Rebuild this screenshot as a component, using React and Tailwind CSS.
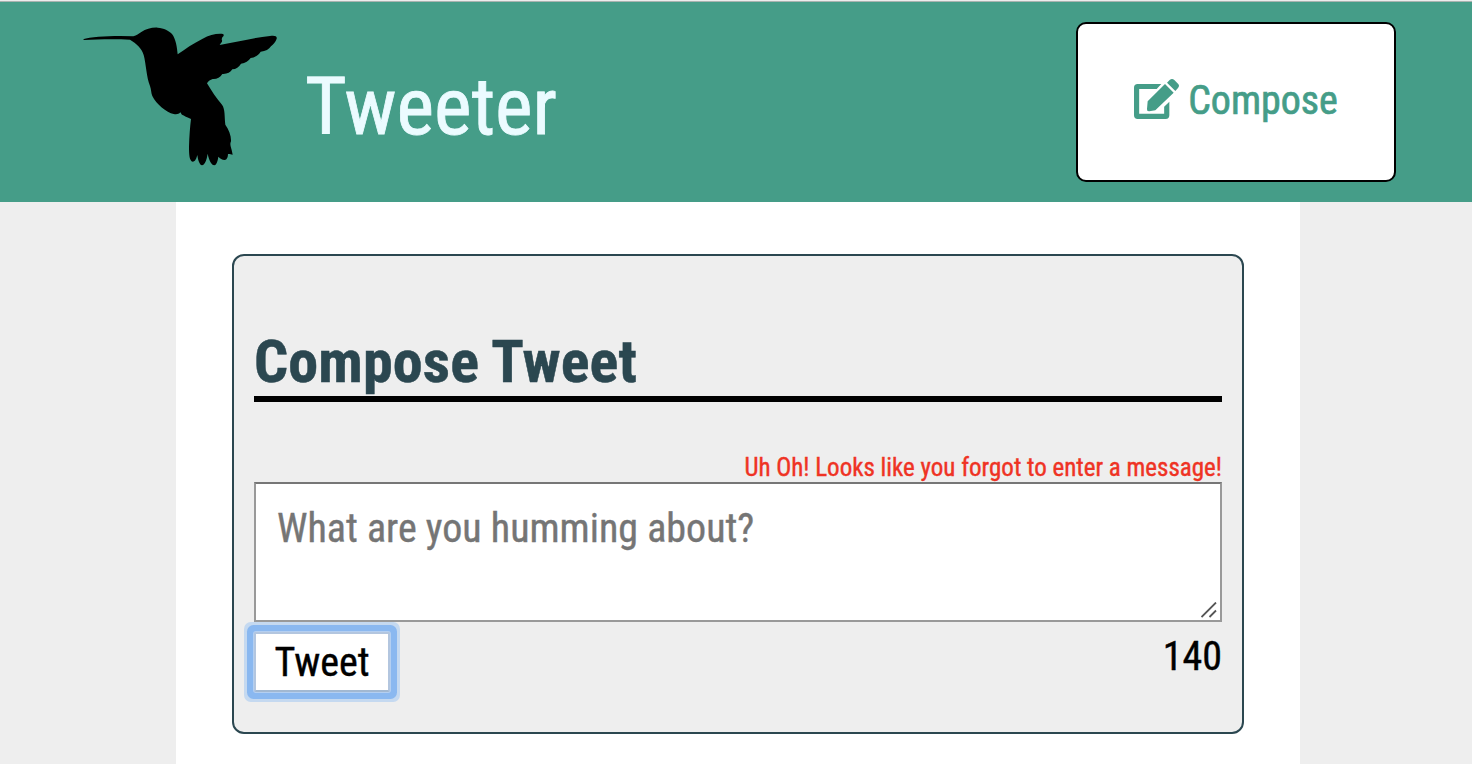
function Hummingbird() {
  return (
    <svg viewBox="0 0 660 630" className="h-[210px] w-[220px] shrink-0" aria-hidden="true">
      <path d="M39 118 C60 111 105 108 150 108 L190 109 C200 106 206 101 214 96 C228 87 245 82 263 83 C282 84 296 92 306 102 C318 118 321 142 323 163 C345 147 370 130 398 116 C418 105 440 100 459 102 C463 105 461 109 457 112 L455 118 C457 122 457 126 453 129 L449 135 C500 126 555 112 600 108 C614 106 622 108 620 116 C617 126 610 133 603 139 C597 148 587 154 572 155 C566 165 555 172 542 174 C536 183 526 190 513 191 C507 201 498 208 487 208 C481 217 471 223 457 222 C450 233 440 238 428 237 C421 239 415 243 411 250 C424 272 440 296 456 314 C466 328 463 350 466 374 C477 390 484 408 483 424 C479 432 482 440 485 450 L488 464 C483 464 478 461 474 462 C474 472 471 479 464 480 C456 480 450 475 445 470 C443 484 440 494 433 496 C424 495 417 481 413 461 C410 480 405 494 396 496 C388 494 384 480 382 465 C379 476 376 484 368 485 C358 482 357 464 357 440 C358 410 360 380 363 357 C352 352 342 347 336 344 C333 342 333 338 331 337 C326 343 319 344 311 342 C290 338 258 312 247 288 C243 279 244 269 240 258 C229 230 228 190 221 165 C215 144 199 131 180 119 C135 117 80 118 43 120 Z" />
    </svg>
  );
}

function EditIcon() {
  return (
    <svg viewBox="0 0 135 120" className="mr-[9px] h-10 w-[45px]" fill="currentColor" aria-hidden="true">
      <path d="M11 15 H82 L68 30 H15.500 V104.500 H90.500 V83 L106 68 V109 Q106 120 95 120 H11 Q0 120 0 109 V26 Q0 15 11 15 Z" />
      <path d="M93 15 L119 41 L64 94 L46 97 Q38 98 39 90 L41 67 Z" />
      <path d="M99 11 L107 3 Q114 -3 121 3 L132 14 Q138 20 132 27 L124 36 Z" />
    </svg>
  );
}

export default function App() {
  return (
    <div className="flex h-[764px] w-[1472px] flex-col overflow-hidden bg-[#eeeeee] font-['Roboto_Condensed','Roboto','Liberation_Sans',sans-serif] text-black [-webkit-text-stroke-width:0.4px] [font-stretch:75%]">
      <header className="flex h-[202px] shrink-0 items-start justify-between border-t border-[#ececec] bg-[#459d88] pr-[76px] pl-[70px] shadow-[inset_0_1px_0_#a9b3b0]">
        <div className="flex items-start">
          <div className="-mt-px"><Hummingbird /></div>
          <h1 className="mt-[59px] ml-[15px] text-[80px] leading-[94px] text-[#ebfbff] [-webkit-text-stroke-width:0.8px]">Tweeter</h1>
        </div>
        <button className="mt-[21px] flex h-40 w-80 items-start justify-center rounded-[10px] border-2 border-black bg-white pt-[55px] text-[40px] leading-[47px] text-[#459d88]">
          <EditIcon />
          <span className="-mt-0.5 [-webkit-text-stroke-width:0.7px]">Compose</span>
        </button>
      </header>
      <main className="ml-44 flex w-[1124px] grow flex-col bg-white px-14 pt-[52px]">
        <section className="flex h-[480px] flex-col rounded-xl border-2 border-[#2b4750] bg-[#eeeeee] px-5 pt-[70px]">
          <h2 className="h-[76px] border-b-[6px] border-black text-[60px] leading-[72px] font-bold tracking-[0.14px] text-[#2b4750] [-webkit-text-stroke-width:0.5px]">Compose Tweet</h2>
          <p className="mt-[50px] h-[30px] text-right text-[25px] leading-[32px] text-[#ef3324]">Uh Oh! Looks like you forgot to enter a message!</p>
          <div className="relative h-[140px]">
            <textarea
              className="block h-[140px] w-full resize-none overflow-hidden border-2 border-[#999999] border-t-[#767676] bg-white pt-[21px] pr-[22px] pl-[21px] text-[40px] leading-[47px] placeholder:text-[#757575]"
              placeholder="What are you humming about?"
            />
            <svg className="absolute right-[5px] bottom-1 h-4 w-4" viewBox="0 0 16 16" fill="none" stroke="#555555" strokeWidth="1.8">
              <path d="M0.5 15 L15 0.5 M8.5 15 L15 8.5" />
            </svg>
          </div>
          <div className="flex items-start justify-between pt-[10px]">
            <button className="h-[60px] w-[136px] rounded-[2px] border-2 border-[#b3c6df] border-b-[#a2b8d1] bg-white text-[40px] leading-[58px] shadow-[0_0_0_1px_#b4cff1,0_0_0_7px_#8ab8f0,0_0_0_10px_#c5d9f0]">
              Tweet
            </button>
            <output className="pt-px text-[40px] leading-[47px]">140</output>
          </div>
        </section>
      </main>
    </div>
  );
}
